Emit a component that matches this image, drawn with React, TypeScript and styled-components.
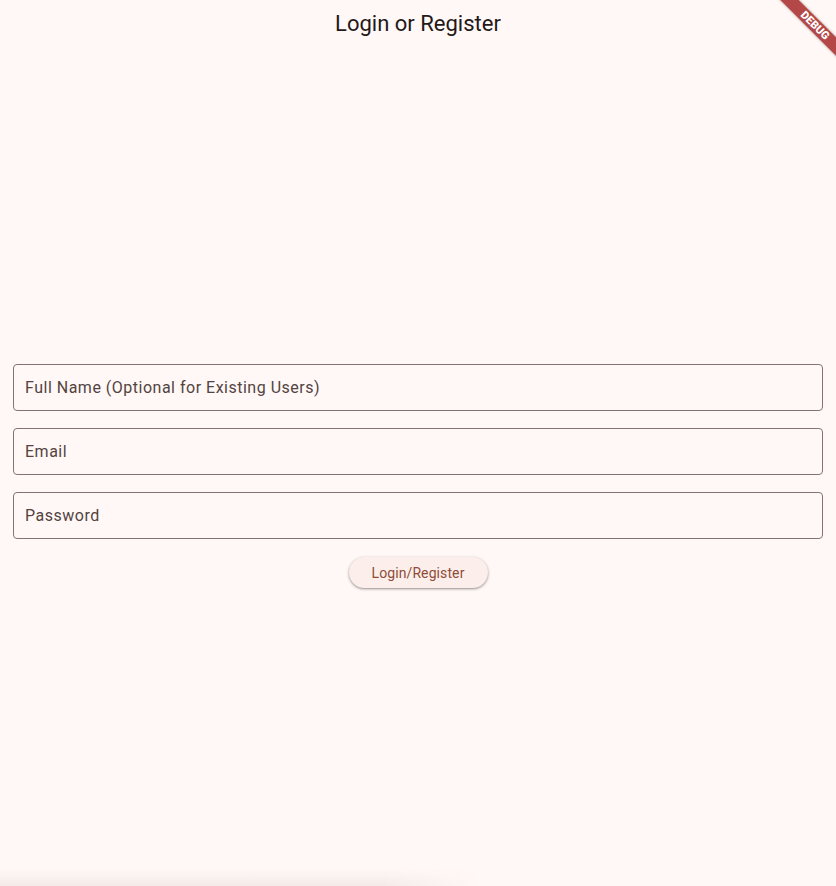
import React from "react";
import styled, { createGlobalStyle } from "styled-components";

const GlobalStyle = createGlobalStyle`
  html, body {
    margin: 0;
    padding: 0;
    background: #fff8f6;
    font-family: Roboto, "Noto Sans", sans-serif;
  }
`;

const fields = [
  "Full Name (Optional for Existing Users)",
  "Email",
  "Password",
];

export default function App() {
  return (
    <>
      <GlobalStyle />
      <Page>
        <AppBar>
          <Title>Login or Register</Title>
        </AppBar>
        <Body>
          <Form>
            {fields.map((label) => (
              <Field key={label}>
                <FieldLabel>{label}</FieldLabel>
              </Field>
            ))}
            <ButtonRow>
              <PillButton>Login/Register</PillButton>
            </ButtonRow>
          </Form>
        </Body>
        <BottomShade />
        <DebugBanner>DEBUG</DebugBanner>
      </Page>
    </>
  );
}

const Page = styled.div`
  position: relative;
  display: flex;
  flex-direction: column;
  width: 836px;
  height: 886px;
  overflow: hidden;
  background: #fff8f6;
`;

const AppBar = styled.header`
  display: flex;
  justify-content: center;
  align-items: center;
  height: 46px;
  padding-top: 2px;
  box-sizing: border-box;
  flex-shrink: 0;
`;

const Title = styled.h1`
  margin: 0;
  font-size: 22px;
  font-weight: 400;
  color: #231918;
  line-height: 28px;
`;

const Body = styled.main`
  flex: 1;
  display: flex;
  flex-direction: column;
  justify-content: center;
  padding: 20px 13px 0;
`;

const Form = styled.div`
  display: flex;
  flex-direction: column;
  gap: 17px;
`;

const Field = styled.div`
  display: flex;
  align-items: center;
  height: 47px;
  box-sizing: border-box;
  padding: 0 11px;
  border: 1px solid #857371;
  border-radius: 4px;
`;

const FieldLabel = styled.span`
  font-size: 16px;
  letter-spacing: 0.5px;
  color: #534341;
`;

const ButtonRow = styled.div`
  display: flex;
  justify-content: center;
  padding-top: 1px;
`;

const PillButton = styled.button`
  height: 31px;
  padding: 0 23px;
  border: none;
  border-radius: 16px;
  background: #fcefeb;
  color: #8f4c38;
  font-family: Roboto, sans-serif;
  font-size: 14px;
  letter-spacing: 0.1px;
  box-shadow: 0 1px 2px rgba(0, 0, 0, 0.3), 0 1px 3px 1px rgba(0, 0, 0, 0.1);
  cursor: pointer;
`;

const BottomShade = styled.div`
  position: absolute;
  left: 0;
  bottom: 0;
  width: 480px;
  height: 18px;
  background: linear-gradient(
    to bottom,
    rgba(120, 90, 90, 0) 0%,
    rgba(120, 90, 90, 0.08) 100%
  );
  -webkit-mask-image: linear-gradient(to right, #000 80%, transparent 100%);
  mask-image: linear-gradient(to right, #000 80%, transparent 100%);
  pointer-events: none;
`;

const DebugBanner = styled.div`
  position: absolute;
  top: 19px;
  right: -31px;
  width: 104px;
  height: 13px;
  transform: rotate(45deg);
  background: rgba(163, 32, 32, 0.82);
  box-shadow: 0 0 3px rgba(0, 0, 0, 0.35);
  color: #fff;
  font-family: Roboto, sans-serif;
  font-size: 11px;
  font-weight: 900;
  line-height: 13px;
  text-align: center;
`;
